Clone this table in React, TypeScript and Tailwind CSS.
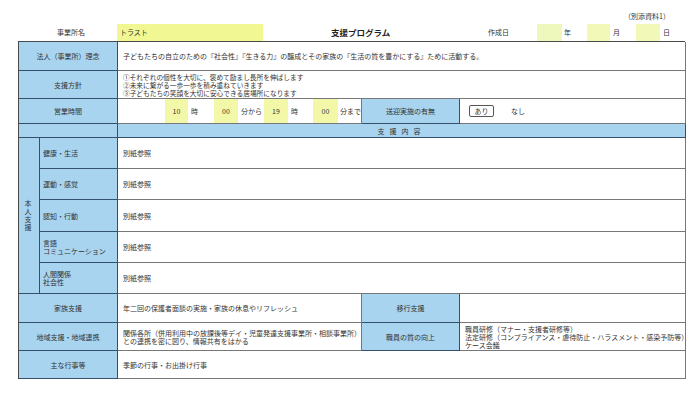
import React from "react";

const BLUE = "bg-[#a9d4ef]";
const LB = "border-r border-b border-[#34506b]"; // label border
const CB = "border-r border-b border-[#777777]"; // content border

function Label({ children, className = "" }: { children: React.ReactNode; className?: string }) {
  return (
    <div className={`${BLUE} ${LB} flex items-center justify-center text-center leading-[8px] ${className}`}>
      {children}
    </div>
  );
}

function Content({ children, className = "" }: { children?: React.ReactNode; className?: string }) {
  return <div className={`bg-white ${CB} flex items-center pl-[5px] leading-[8px] whitespace-nowrap ${className}`}>{children}</div>;
}

function Lines({ lines, className = "" }: { lines: string[]; className?: string }) {
  return (
    <p className={`leading-[8px] ${className}`}>
      {lines.map((l, i) => (
        <React.Fragment key={l}>
          {i > 0 && <br />}
          {l}
        </React.Fragment>
      ))}
    </p>
  );
}

function SubLabel({ lines }: { lines: string[] }) {
  return (
    <div className={`${BLUE} ${LB} flex items-center pl-[3px]`}>
      <Lines lines={lines} />
    </div>
  );
}

export default function App() {
  const font = { fontFamily: '"Noto Sans CJK JP", "Noto Sans", sans-serif' };
  return (
    <div
      className="w-[700px] h-[398px] bg-white text-[#333333] text-[7px] flex flex-col"
      style={font}
    >
      {/* top note */}
      <div className="h-[24px] flex items-end justify-end pr-[30px] pb-[4px] leading-[8px]">（別添資料1）</div>

      {/* header row */}
      <div className="h-[17px] flex items-stretch">
        <div className="w-[57px]" />
        <div className="w-[60px] flex items-center">事業所名</div>
        <div className="w-[146px] bg-[#f1f792] flex items-center pl-[3px]">トラスト</div>
        <div className="w-[68px]" />
        <div className="w-[157px] flex items-center text-[8.5px] font-bold text-[#222]">支援プログラム</div>
        <div className="w-[49px] flex items-center">作成日</div>
        <div className="w-[25px] bg-[#eef8bd]" />
        <div className="w-[25px] flex items-center pl-[2px]">年</div>
        <div className="w-[23px] bg-[#f2f8b8]" />
        <div className="w-[26px] flex items-center pl-[3px]">月</div>
        <div className="w-[24px] bg-[#f2f8b8]" />
        <div className="flex items-center pl-[3px]">日</div>
      </div>

      {/* main table */}
      <div className="ml-[18px] w-[667px] grid grid-cols-[21px_78px_244px_98px_226px] grid-rows-[29px_28px_25px_14px_31px_31px_32px_31px_31px_29px_28px_28px] border-l border-t border-[#4a4a4a]">
        {/* row 1 */}
        <Label className="col-span-2">法人（事業所）理念</Label>
        <Content className="col-span-3">
          子どもたちの自立のための『社会性』『生きる力』の醸成とその家族の『生活の質を豊かにする』ために活動する。
        </Content>

        {/* row 2 */}
        <Label className="col-span-2">支援方針</Label>
        <Content className="col-span-3">
          <Lines
            className="text-[6.7px] leading-[7.5px]"
            lines={[
              "①それぞれの個性を大切に、褒めて励まし長所を伸ばします",
              "②未来に繋がる一歩一歩を積み重ねていきます",
              "③子どもたちの笑顔を大切に安心できる居場所になります",
            ]}
          />
        </Content>

        {/* row 3 */}
        <Label className="col-span-2">営業時間</Label>
        <div className={`bg-white ${CB} flex items-stretch`}>
          <div className="w-[47px]" />
          <div className="w-[23px] bg-[#f2f8a8] flex items-center justify-center">10</div>
          <div className="w-[26px] flex items-center pl-[3px]">時</div>
          <div className="w-[24px] bg-[#f2f8a8] flex items-center justify-center">00</div>
          <div className="w-[26px] flex items-center pl-[3px]">分から</div>
          <div className="w-[24px] bg-[#f2f8a8] flex items-center justify-center">19</div>
          <div className="w-[25px] flex items-center pl-[3px]">時</div>
          <div className="w-[25px] bg-[#f2f8a8] flex items-center justify-center">00</div>
          <div className="flex items-center pl-[2px]">分まで</div>
        </div>
        <Label>送迎実施の有無</Label>
        <div className={`bg-white ${CB} flex items-center`}>
          <div className="ml-[9px] w-[25px] h-[12px] border border-[#555] rounded-[2px] flex items-center justify-center leading-[8px]">
            あり
          </div>
          <div className="ml-[17px]">なし</div>
        </div>

        {/* row 4 */}
        <div className={`${BLUE} ${LB} col-span-2`} />
        <div className={`${BLUE} border-r border-b border-[#34506b] col-span-3 flex items-center justify-center tracking-[5px] leading-[8px]`}>
          支援内容
        </div>

        {/* 本人支援 */}
        <div className={`${BLUE} ${LB} row-span-5 flex items-center justify-center pr-[2px]`}>
          <span className="[writing-mode:vertical-rl] [text-orientation:upright] tracking-[1px] leading-[8px]">本人支援</span>
        </div>
        <SubLabel lines={["健康・生活"]} />
        <Content className="col-span-3">別紙参照</Content>
        <SubLabel lines={["運動・感覚"]} />
        <Content className="col-span-3">別紙参照</Content>
        <SubLabel lines={["認知・行動"]} />
        <Content className="col-span-3">別紙参照</Content>
        <SubLabel lines={["言語", "コミュニケーション"]} />
        <Content className="col-span-3">別紙参照</Content>
        <SubLabel lines={["人間関係", "社会性"]} />
        <Content className="col-span-3">別紙参照</Content>

        {/* 家族支援 */}
        <Label className="col-span-2">家族支援</Label>
        <Content>年二回の保護者面談の実施・家族の休息やリフレッシュ</Content>
        <Label>移行支援</Label>
        <Content />

        {/* 地域支援 */}
        <Label className="col-span-2">地域支援・地域連携</Label>
        <Content className="overflow-visible">
          <Lines
            lines={[
              "関係各所（併用利用中の放課後等デイ・児童発達支援事業所・相談事業所）",
              "との連携を密に図り、情報共有をはかる",
            ]}
          />
        </Content>
        <Label>職員の質の向上</Label>
        <Content className="pl-[3px]">
          <Lines
            lines={[
              "職員研修（マナー・支援者研修等）",
              "法定研修（コンプライアンス・虐待防止・ハラスメント・感染予防等）",
              "ケース会議",
            ]}
          />
        </Content>

        {/* 主な行事等 */}
        <Label className="col-span-2">主な行事等</Label>
        <Content className="col-span-3">季節の行事・お出掛け行事</Content>
      </div>
    </div>
  );
}
